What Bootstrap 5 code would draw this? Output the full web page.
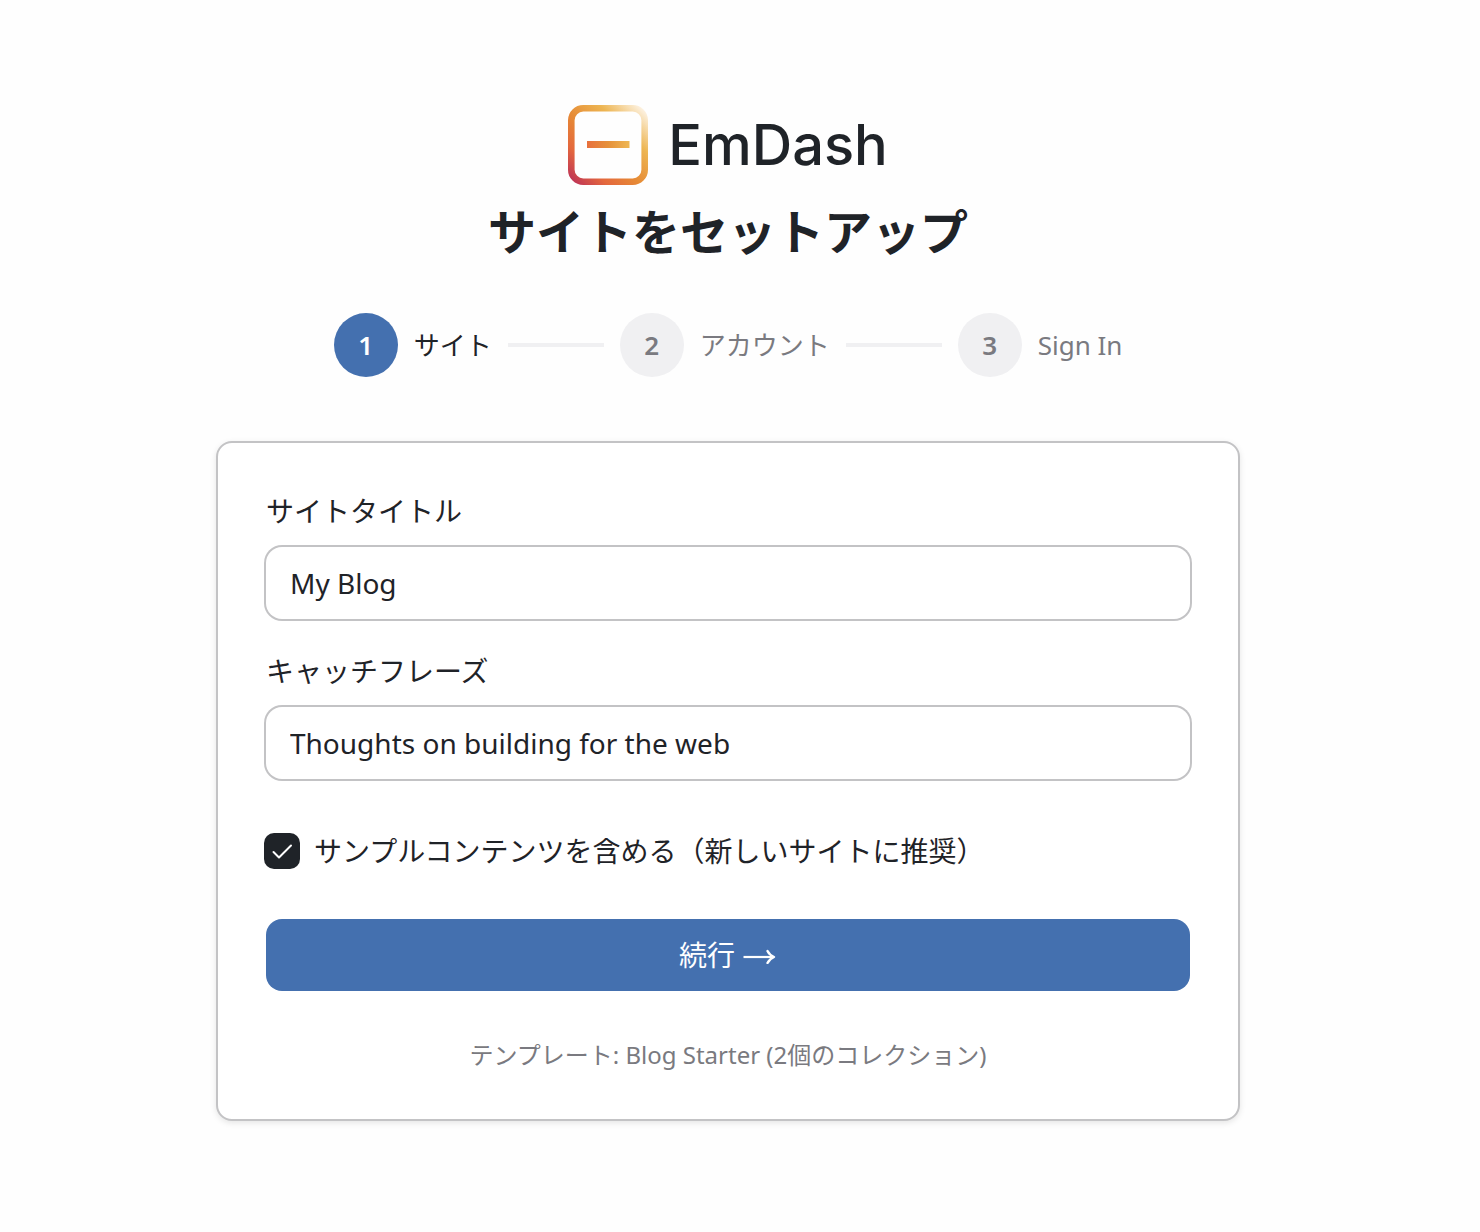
<!DOCTYPE html>
<html lang="ja">
<head>
<meta charset="utf-8">
<meta name="viewport" content="width=device-width, initial-scale=1">
<title>EmDash</title>
<link href="https://cdn.jsdelivr.net/npm/bootstrap@5.3.0/dist/css/bootstrap.min.css" rel="stylesheet">
<style>
  :root { --ink: #1f2328; --line: #c3c3c5; --brand: #4470af; --soft: #f0f0f2; --quiet: #7a7a80; }
  body { font-family: "Noto Sans", "Noto Sans CJK JP", sans-serif; font-size: 28px; line-height: 40px; color: var(--ink); background: #fefefe; }
  .setup-page { padding: 105px 24px 96px 0; }
  .setup-wrap { max-width: 1024px; }
  .brand-row { gap: 20px; height: 80px; }
  .brand-name { font-family: Inter, sans-serif; font-size: 56px; line-height: 80px; font-weight: 500; }
  .setup-title { font-size: 48px; line-height: 64px; font-weight: 700; margin: 15px 0 49px; }
  .steps { margin-bottom: 64px; font-size: 26px; color: var(--quiet); }
  .step-dot { width: 64px; height: 64px; background: var(--soft); font-weight: 600; }
  .step-on { color: var(--ink); }
  .step-on .step-dot { background: var(--brand); color: #fff; }
  .step-rule { width: 96px; height: 4px; background: var(--soft); }
  .setup-card { border: 2px solid var(--line); border-radius: 16px; background: #fff; padding: 48px; box-shadow: 0 2px 6px rgba(0,0,0,.1); }
  .field { margin-bottom: 32px; }
  .field .form-label { display: block; margin-bottom: 16px; }
  .field .form-control { height: 72px; border: 0; border-radius: 16px; padding: 0 24px; font-size: 28px; color: var(--ink); box-shadow: 0 0 0 2px var(--line); }
  .sample-row { margin: 52px 0 48px; gap: 16px; }
  .tick { appearance: none; width: 32px; height: 32px; margin: 0; border-radius: 8px; background: var(--ink); box-shadow: 0 0 0 2px var(--ink); }
  .tick-mark { pointer-events: none; }
  .btn-next { height: 72px; border: 0; border-radius: 16px; background: var(--brand); color: #fff; font-size: 28px; line-height: 40px; gap: 8px; }
  .btn-next:hover { background: #3a639d; color: #fff; }
  .template-note { margin: 48px 0 0; font-size: 24px; line-height: 32px; color: var(--quiet); }
</style>
<script defer src="https://cdn.jsdelivr.net/npm/bootstrap@5.3.0/dist/js/bootstrap.bundle.min.js"></script>
</head>
<body>
<main class="setup-page">
  <div class="setup-wrap mx-auto">
    <header class="text-center">
      <div class="brand-row d-flex justify-content-center align-items-center">
        <svg width="80" height="80" viewBox="0 0 80 80" aria-hidden="true">
          <defs>
            <linearGradient id="frame" gradientUnits="userSpaceOnUse" x1="4" y1="76" x2="76" y2="4">
              <stop offset="0" stop-color="#bf3556"/>
              <stop offset=".22" stop-color="#e4683d"/>
              <stop offset=".45" stop-color="#e68a35"/>
              <stop offset=".72" stop-color="#edb552"/>
              <stop offset="1" stop-color="#fdf3e4"/>
            </linearGradient>
            <linearGradient id="dash" gradientUnits="userSpaceOnUse" x1="19" y1="0" x2="62" y2="0">
              <stop offset="0" stop-color="#e8703d"/>
              <stop offset=".5" stop-color="#e6913a"/>
              <stop offset="1" stop-color="#eeb854"/>
            </linearGradient>
          </defs>
          <rect x="3.3" y="3.3" width="73.4" height="73.4" rx="12" fill="none" stroke="url(#frame)" stroke-width="6.6"/>
          <rect x="19" y="36" width="42.500" height="7" fill="url(#dash)"/>
        </svg>
        <div class="brand-name">EmDash</div>
      </div>
      <h1 class="setup-title">サイトをセットアップ</h1>
    </header>

    <ol class="steps list-unstyled d-flex justify-content-center align-items-center gap-3">
      <li class="step-on d-flex align-items-center gap-3" aria-current="step">
        <span class="step-dot rounded-circle d-flex justify-content-center align-items-center">1</span>
        <span>サイト</span>
      </li>
      <li class="step-rule" aria-hidden="true"></li>
      <li class="d-flex align-items-center gap-3">
        <span class="step-dot rounded-circle d-flex justify-content-center align-items-center">2</span>
        <span>アカウント</span>
      </li>
      <li class="step-rule" aria-hidden="true"></li>
      <li class="d-flex align-items-center gap-3">
        <span class="step-dot rounded-circle d-flex justify-content-center align-items-center">3</span>
        <span>Sign In</span>
      </li>
    </ol>

    <form class="setup-card">
      <div class="field">
        <label class="form-label" for="site-title">サイトタイトル</label>
        <input class="form-control" id="site-title" type="text" value="My Blog">
      </div>
      <div class="field">
        <label class="form-label" for="tagline">キャッチフレーズ</label>
        <input class="form-control" id="tagline" type="text" value="Thoughts on building for the web">
      </div>
      <div class="sample-row d-flex align-items-center">
        <span class="position-relative d-flex">
          <input class="tick" id="sample" type="checkbox" checked>
          <svg class="tick-mark position-absolute top-0 start-0" width="32" height="32" viewBox="0 0 32 32" fill="none" stroke="#fff" stroke-width="2" stroke-linecap="round" stroke-linejoin="round" aria-hidden="true"><path d="M7.500 17l5.500 5.500L25 10.500"/></svg>
        </span>
        <label for="sample">サンプルコンテンツを含める（新しいサイトに推奨）</label>
      </div>
      <button class="btn btn-next w-100 d-flex justify-content-center align-items-center" type="button">
        <span>続行</span>
        <svg width="34" height="18" viewBox="0 0 34 18" fill="none" stroke="#fff" aria-hidden="true"><path d="M.5 11H30" stroke-width="2.200"/><path d="M24.500 5Q26.500 9 31 11Q26.500 13 24.500 17" stroke-width="2.400" stroke-linecap="round" stroke-linejoin="round"/></svg>
      </button>
      <p class="template-note text-center">テンプレート: Blog Starter (2個のコレクション)</p>
    </form>
  </div>
</main>
</body>
</html>
